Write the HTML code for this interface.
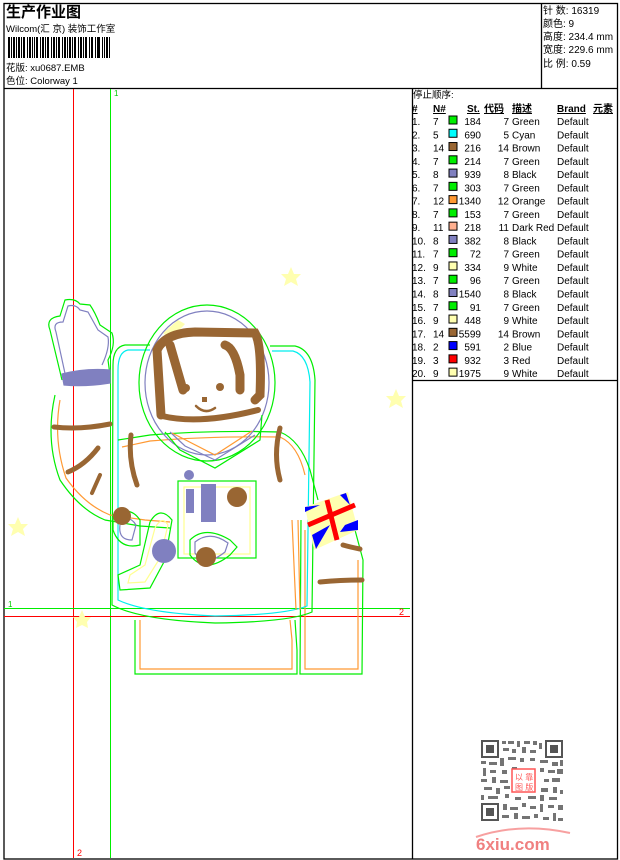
<!DOCTYPE html>
<html><head><meta charset="utf-8"><style>
html,body{margin:0;padding:0;background:#fff;width:620px;height:860px;overflow:hidden}
svg{display:block}
text{font-family:"Liberation Sans","Noto Sans CJK SC",sans-serif;font-size:10px;fill:#000}
</style></head><body>
<svg width="620" height="860" viewBox="0 0 620 860" xmlns="http://www.w3.org/2000/svg">
<g fill="none" stroke="#000" stroke-width="1.3">
<rect x="4" y="3.5" width="613.5" height="855.5"/>
<line x1="4" y1="88.5" x2="617.5" y2="88.5"/>
<line x1="541.5" y1="3.5" x2="541.5" y2="88.5"/>
<line x1="412.5" y1="88.5" x2="412.5" y2="859"/>
<line x1="412.5" y1="380.5" x2="617.5" y2="380.5"/>
</g>
<text x="6" y="17" style="font-size:15px;font-weight:bold">生产作业图</text>
<text x="6" y="32" style="font-size:9.5px">Wilcom(汇 京) 装饰工作室</text>
<g fill="#000">
<rect x="8" y="37" width="2" height="21"/><rect x="11" y="37" width="1" height="21"/><rect x="13" y="37" width="2" height="21"/><rect x="16" y="37" width="1" height="21"/><rect x="18" y="37" width="2" height="21"/><rect x="21" y="37" width="1" height="21"/><rect x="23" y="37" width="2" height="21"/><rect x="27" y="37" width="1" height="21"/><rect x="29" y="37" width="2" height="21"/><rect x="32" y="37" width="1" height="21"/><rect x="34" y="37" width="1" height="21"/><rect x="36" y="37" width="2" height="21"/><rect x="40" y="37" width="1" height="21"/><rect x="42" y="37" width="2" height="21"/><rect x="45" y="37" width="1" height="21"/><rect x="47" y="37" width="2" height="21"/><rect x="51" y="37" width="1" height="21"/><rect x="53" y="37" width="2" height="21"/><rect x="56" y="37" width="1" height="21"/><rect x="58" y="37" width="2" height="21"/><rect x="62" y="37" width="1" height="21"/><rect x="64" y="37" width="2" height="21"/><rect x="67" y="37" width="1" height="21"/><rect x="69" y="37" width="2" height="21"/><rect x="72" y="37" width="1" height="21"/><rect x="74" y="37" width="2" height="21"/><rect x="78" y="37" width="1" height="21"/><rect x="80" y="37" width="2" height="21"/><rect x="83" y="37" width="1" height="21"/><rect x="85" y="37" width="2" height="21"/><rect x="89" y="37" width="1" height="21"/><rect x="91" y="37" width="2" height="21"/><rect x="95" y="37" width="1" height="21"/><rect x="97" y="37" width="3" height="21"/><rect x="102" y="37" width="1" height="21"/><rect x="104" y="37" width="1" height="21"/><rect x="106" y="37" width="2" height="21"/><rect x="109" y="37" width="1" height="21"/>
</g>
<text x="6" y="71" style="font-size:9.5px">花版: xu0687.EMB</text>
<text x="6" y="84" style="font-size:9.5px">色位: Colorway 1</text>
<g style="font-size:9.5px">
<text x="543" y="14">针 数: 16319</text>
<text x="543" y="27">颜色: 9</text>
<text x="543" y="40">高度: 234.4 mm</text>
<text x="543" y="53">宽度: 229.6 mm</text>
<text x="543" y="67">比 例: 0.59</text>
</g>
<text x="413" y="98" style="font-size:9.5px">停止顺序:</text>
<g style="font-size:9.5px;font-weight:bold;text-decoration:underline">
<text x="412" y="112">#</text><text x="433" y="112">N#</text><text x="467" y="112">St.</text><text x="484" y="112">代码</text><text x="512" y="112">描述</text><text x="557" y="112">Brand</text><text x="593" y="112">元素</text>
</g>
<g id="rows" style="font-size:9.5px"></g>
<line x1="73.5" y1="89" x2="73.5" y2="858" stroke="#f00" stroke-width="1"/>
<line x1="110.5" y1="89" x2="110.5" y2="858" stroke="#0e0" stroke-width="1"/>
<line x1="4" y1="608.5" x2="410" y2="608.5" stroke="#0e0" stroke-width="1"/>
<line x1="4" y1="616.5" x2="410" y2="616.5" stroke="#f00" stroke-width="1"/>
<text x="114" y="96" style="font-size:8px;fill:#0c0">1</text>
<text x="8" y="607" style="font-size:8px;fill:#0c0">1</text>
<text x="399" y="615" style="font-size:9px;fill:#f00">2</text>
<text x="77" y="856" style="font-size:9px;fill:#f00">2</text>
<g fill="#ffffb0">
<polygon points="291,267 294,274 301,274 296,279 298,286 291,282 284,286 286,279 281,274 288,274"/>
<polygon points="396,389 399,396 406,396 401,401 403,408 396,404 389,408 391,401 386,396 393,396"/>
<polygon points="18,517 21,524 28,524 23,529 25,536 18,532 11,536 13,529 8,524 15,524"/>
<polygon points="82,610 85,617 91,617 87,622 88,628 82,625 76,628 77,622 73,617 79,617"/>
<polygon points="163,333 178,320 185,324 170,340"/>
</g>
<g fill="none" stroke-width="1.2">
<path d="M135,620 L135,674 L297,674 L297,650 L295,620" stroke="#0e0"/>
<path d="M140,620 L140,669 L292,669 L292,640 L290,620" stroke="#f93"/>
<path d="M301,520 L300,674 L362,674 L363,560 L355,530" stroke="#0e0"/>
<path d="M305,530 L305,669 L358,669 L358,560" stroke="#f93"/>
<path d="M150,345 L125,345 Q113,347 113,365 L112,605 Q140,620 215,623 Q290,622 312,612 L315,380 Q313,350 295,346 L270,346" stroke="#0e0"/>
<path d="M150,350 L128,350 Q118,352 118,370 L118,600 Q145,613 215,616 Q285,615 307,606 L310,382 Q308,355 293,351 L272,351" stroke="#0ee"/>
<path d="M118,440 L150,435 Q210,430 280,432 Q300,440 310,470 L318,500" stroke="#0e0"/>
<path d="M122,447 L150,441 Q210,436 280,437 Q298,445 305,475" stroke="#f93"/>
<path d="M55,395 Q45,440 60,480 Q80,510 105,520 L140,526 L170,528" stroke="#0e0"/>
<path d="M60,400 Q53,440 66,478 Q85,505 110,515 L145,520 L170,522" stroke="#f93"/>
<path d="M62,380 L50,330 Q45,318 60,316 L65,300 Q75,298 80,304 L90,305 Q95,312 100,325 L112,333 Q116,345 108,360 L110,375" stroke="#0e0"/>
<path d="M66,378 L56,332 Q52,322 63,322 L68,306 Q76,304 80,310 L88,312 L98,330 L108,337 Q110,348 102,365" stroke="#8080c0"/>
<path d="M62,374 Q85,368 110,370 L110,383 Q85,387 64,385 Z" fill="#8080c0" stroke="#8080c0"/>
<ellipse cx="207" cy="383" rx="68" ry="78" stroke="#0e0"/>
<ellipse cx="207" cy="383" rx="62" ry="72" stroke="#8080c0"/>
<path d="M165,432 L180,450 L215,468 L260,440 L262,415" stroke="#0e0"/>
<path d="M170,432 L185,446 L215,460 L255,435" stroke="#8080c0"/>
<path d="M172,433 L215,455 L252,431" stroke="#f93"/>
<rect x="178" y="481" width="78" height="77" stroke="#0e0"/>
<rect x="184" y="487" width="66" height="67" stroke="#ffff90"/>
<path d="M190,540 Q205,525 230,540 L237,547 L230,555 Q205,575 190,555 Z" stroke="#0e0"/>
<path d="M195,542 Q210,530 228,543 L225,552 Q205,568 195,553 Z" stroke="#8080c0"/>
<path d="M113,515 Q130,505 140,520 L140,545 Q120,550 113,530 Z" stroke="#0e0"/>
<path d="M120,520 Q130,515 136,525 L132,540 Q118,540 120,525" stroke="#8080c0"/>
<path d="M150,522 Q160,505 172,520 L165,560 L150,588 L120,590 L118,575 L140,565 Z" stroke="#0e0"/>
<path d="M155,528 Q162,515 168,525 L160,558 L145,582 L128,583 L130,575 L145,565 Z" stroke="#ffff90"/>
<path d="M292,520 L296,610 M298,520 L300,610" stroke="#f93"/>
</g>
<g fill="none" stroke="#996633" stroke-linecap="round">
<path d="M161,415 L157,350 Q165,333 195,332 L255,333 Q262,345 260,395 L255,400" stroke-width="9"/>
<path d="M162,416 Q200,425 258,410" stroke-width="6"/>
<path d="M170,345 L183,390" stroke-width="9"/>
<path d="M225,345 Q235,348 240,375 L240,390" stroke-width="9"/>
<path d="M196,406 Q205,415 215,408" stroke-width="2.5"/>
<path d="M54,427 Q80,430 110,424" stroke-width="5"/>
<path d="M68,472 Q85,465 98,448" stroke-width="5"/>
<path d="M100,475 L92,493" stroke-width="4"/>
<path d="M131,435 Q128,460 137,485" stroke-width="5"/>
<path d="M280,428 Q273,455 280,480" stroke-width="5"/>
<path d="M343,545 Q350,547 360,549" stroke-width="5"/>
<path d="M320,582 Q340,580 362,580" stroke-width="5"/>
</g>
<g fill="#996633">
<circle cx="186" cy="388" r="4"/><circle cx="220" cy="387" r="4"/><rect x="202" y="397" width="5" height="5"/>
<circle cx="237" cy="497" r="10"/><circle cx="206" cy="557" r="10"/><circle cx="122" cy="516" r="9"/>
</g>
<g fill="#8080c0">
<circle cx="189" cy="475" r="5"/><rect x="186" y="489" width="8" height="24"/><rect x="201" y="484" width="15" height="38"/>
<circle cx="164" cy="551" r="12"/>
</g>
<g>
<path d="M305,507 L348,492 L358,530 L314,550 Z" fill="#ffffb0"/>
<path d="M305,507 L320,505 L305,512 Z M340,495 L346,493 L350,505 Z M312,535 L330,525 L316,549 Z M345,525 L358,520 L358,530 L340,532 Z" fill="#00f"/>
<path d="M308,525 L355,505 M327,500 L337,540" stroke="#f00" stroke-width="5"/>
</g>
<g fill="#555">
<rect x="481" y="740" width="18" height="18"/><rect x="483" y="742" width="14" height="14" fill="#fff"/><rect x="486" y="745" width="8" height="8"/>
<rect x="545" y="740" width="18" height="18"/><rect x="547" y="742" width="14" height="14" fill="#fff"/><rect x="550" y="745" width="8" height="8"/>
<rect x="481" y="803" width="18" height="18"/><rect x="483" y="805" width="14" height="14" fill="#fff"/><rect x="486" y="808" width="8" height="8"/>
</g>
<g fill="#666" opacity="0.9">
<rect x="502" y="741" width="4" height="3"/><rect x="508" y="741" width="6" height="3"/><rect x="517" y="741" width="3" height="6"/><rect x="524" y="741" width="6" height="3"/><rect x="533" y="741" width="4" height="4"/><rect x="539" y="743" width="3" height="6"/>
<rect x="503" y="748" width="6" height="3"/><rect x="512" y="749" width="4" height="4"/><rect x="522" y="747" width="4" height="6"/><rect x="530" y="750" width="6" height="3"/>
<rect x="481" y="761" width="5" height="3"/><rect x="489" y="762" width="8" height="3"/><rect x="500" y="758" width="4" height="8"/><rect x="508" y="757" width="8" height="3"/><rect x="520" y="758" width="4" height="4"/><rect x="530" y="758" width="5" height="3"/><rect x="540" y="760" width="8" height="3"/><rect x="552" y="762" width="6" height="4"/><rect x="560" y="760" width="3" height="6"/>
<rect x="483" y="768" width="3" height="8"/><rect x="490" y="770" width="6" height="3"/><rect x="502" y="770" width="5" height="4"/><rect x="512" y="767" width="5" height="3"/><rect x="540" y="768" width="4" height="4"/><rect x="548" y="770" width="7" height="3"/><rect x="557" y="769" width="6" height="5"/>
<rect x="481" y="779" width="6" height="3"/><rect x="492" y="777" width="4" height="6"/><rect x="500" y="780" width="8" height="3"/><rect x="544" y="779" width="5" height="3"/><rect x="552" y="778" width="8" height="4"/>
<rect x="484" y="787" width="8" height="3"/><rect x="496" y="788" width="4" height="6"/><rect x="504" y="786" width="6" height="3"/><rect x="541" y="788" width="7" height="4"/><rect x="553" y="787" width="4" height="6"/><rect x="560" y="790" width="3" height="4"/>
<rect x="481" y="795" width="3" height="5"/><rect x="488" y="796" width="10" height="3"/><rect x="505" y="794" width="4" height="4"/><rect x="515" y="797" width="6" height="3"/><rect x="528" y="796" width="8" height="3"/><rect x="540" y="795" width="4" height="6"/><rect x="549" y="797" width="8" height="3"/>
<rect x="503" y="804" width="4" height="6"/><rect x="510" y="807" width="8" height="3"/><rect x="522" y="803" width="4" height="4"/><rect x="530" y="806" width="6" height="3"/><rect x="540" y="804" width="3" height="8"/><rect x="548" y="805" width="6" height="3"/><rect x="558" y="805" width="5" height="5"/>
<rect x="502" y="815" width="7" height="3"/><rect x="514" y="813" width="4" height="6"/><rect x="522" y="816" width="8" height="3"/><rect x="534" y="814" width="4" height="4"/><rect x="543" y="817" width="6" height="3"/><rect x="553" y="813" width="3" height="8"/><rect x="558" y="818" width="5" height="3"/>
</g>
<rect x="512" y="769" width="23" height="23" fill="#fff" stroke="#f55" stroke-width="1.5"/>
<text x="515" y="780" style="font-size:8px;fill:#f55">以 靠</text>
<text x="515" y="790" style="font-size:8px;fill:#f55">图 版</text>
<path d="M476,837 Q520,822 570,833" fill="none" stroke="#f7a0a0" stroke-width="2"/>
<text x="476" y="850" style="font-size:17px;font-weight:bold;fill:#f08080">6xiu.com</text>
</svg>
<script>
var d=[["1.","7","#0e0","184","7","Green"],["2.","5","#0ff","690","5","Cyan"],["3.","14","#996633","216","14","Brown"],["4.","7","#0e0","214","7","Green"],["5.","8","#8080c0","939","8","Black"],["6.","7","#0e0","303","7","Green"],["7.","12","#f93","1340","12","Orange"],["8.","7","#0e0","153","7","Green"],["9.","11","#ffb090","218","11","Dark Red"],["10.","8","#8080c0","382","8","Black"],["11.","7","#0e0","72","7","Green"],["12.","9","#ffffb0","334","9","White"],["13.","7","#0e0","96","7","Green"],["14.","8","#8080c0","1540","8","Black"],["15.","7","#0e0","91","7","Green"],["16.","9","#ffffb0","448","9","White"],["17.","14","#996633","5599","14","Brown"],["18.","2","#00f","591","2","Blue"],["19.","3","#f00","932","3","Red"],["20.","9","#ffffb0","1975","9","White"]];
var g=document.getElementById("rows"),h="";
d.forEach(function(r,i){var y=125+i*13.27;
h+='<text x="412" y="'+y+'">'+r[0]+'</text><text x="433" y="'+y+'">'+r[1]+'</text>'+
'<rect x="449" y="'+(y-9)+'" width="8" height="8" fill="'+r[2]+'" stroke="#000" stroke-width="1"/>'+
'<text x="481" y="'+y+'" text-anchor="end">'+r[3]+'</text><text x="509" y="'+y+'" text-anchor="end">'+r[4]+'</text>'+
'<text x="512" y="'+y+'">'+r[5]+'</text><text x="557" y="'+y+'">Default</text>';});
g.innerHTML=h;
</script>
</body></html>
